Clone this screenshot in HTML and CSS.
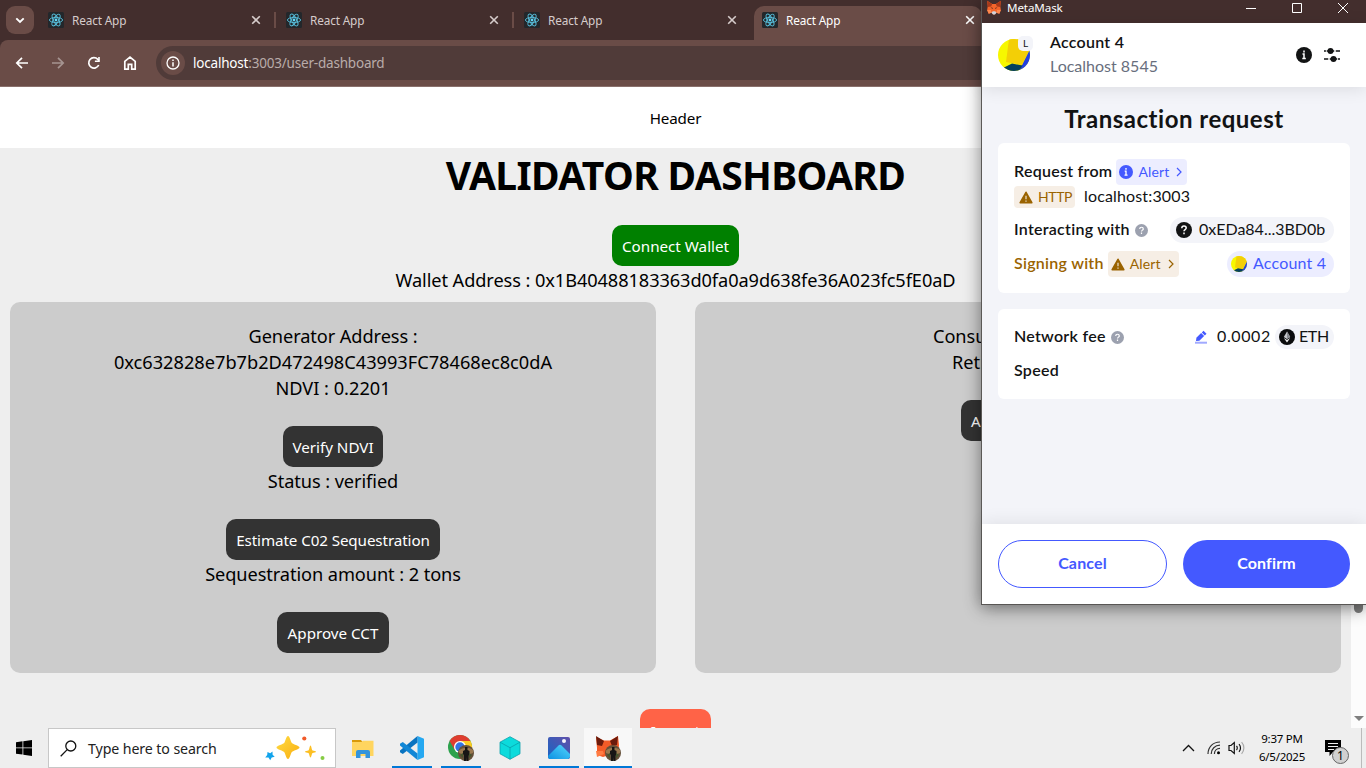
FILE: index.html
```html
<!DOCTYPE html>
<html lang="en">
<head>
<meta charset="utf-8">
<title>React App</title>
<link rel="stylesheet" href="styles.css">
</head>
<body>
<svg width="0" height="0" class="defs">
  <defs>
    <symbol id="react" viewBox="0 0 16 16"><rect width="16" height="16" rx="1.5" fill="#23272b"/><g fill="none" stroke="#58bfdc" stroke-width=".9"><ellipse cx="8" cy="8" rx="6.6" ry="2.6"/><ellipse cx="8" cy="8" rx="6.6" ry="2.6" transform="rotate(60 8 8)"/><ellipse cx="8" cy="8" rx="6.6" ry="2.6" transform="rotate(120 8 8)"/></g><circle cx="8" cy="8" r="1.4" fill="#61dafb"/></symbol>
    <symbol id="close" viewBox="0 0 10 10"><path d="M1.2 1.2l7.6 7.6M8.8 1.2L1.2 8.8" stroke="currentColor" stroke-width="1.6" fill="none"/></symbol>
    <symbol id="fox" viewBox="0 0 24 24"><path d="M1 1l8 5.5h6L23 1l-1 9 1 6-2.5 6-5-1.5L13.500 23h-3L8 20.500 3.500 22 1 16l1-6z" fill="#f4652b"/><path d="M1 1l8 5.500-1.500 4L2 11zM23 1l-8 5.500 1.500 4L22 11z" fill="#a8391a"/><path d="M1 16h6l1 4.500L3.500 22zM23 16h-6l-1 4.500 4.500 1.500z" fill="#ff8a50"/><path d="M8 20.500L10 18h4l2 2.500-2.500 2.500h-3z" fill="#cfd4dc"/><path d="M6.500 12l3 .5.500 2zM17.500 12l-3 .5-.5 2z" fill="#2b1a1a"/></symbol>
    <symbol id="warn" viewBox="0 0 14 13"><path d="M7 1.300L12.800 11.700H1.200z" fill="currentColor" stroke="currentColor" stroke-width="1.600" stroke-linejoin="round"/><path d="M7 4.700v3.600M7 9.500v1.200" stroke="#f6eee5" stroke-width="1.100"/></symbol>
    <symbol id="info" viewBox="0 0 16 16"><circle cx="8" cy="8" r="8" fill="currentColor"/><path d="M8 3.500v1.900M6.500 7.100H8v4.200M6.300 11.600h3.500" stroke="#fff" stroke-width="1.500" fill="none"/></symbol>
    <symbol id="help" viewBox="0 0 16 16"><circle cx="8" cy="8" r="8" fill="currentColor"/><path d="M5.800 6.200c0-3 4.400-2.800 4.400-.2C10.200 7.600 8 7.500 8 9.300M8 10.600v1.600" stroke="#fff" stroke-width="1.500" fill="none"/></symbol>
    <symbol id="chev" viewBox="0 0 6 10"><path d="M1 1l4 4-4 4" fill="none" stroke="currentColor" stroke-width="1.200"/></symbol>
    <clipPath id="round"><circle cx="16" cy="16" r="16"/></clipPath>
    <symbol id="avatar" viewBox="0 0 32 32"><g clip-path="url(#round)"><path fill="#f7f700" d="M0 0h32v32H0z"/><path fill="#2340e0" d="M32 10L21 32h11z"/><path fill="#f3cf06" d="M11 0h21v10l-8 16-16-3z"/><path fill="#033f5e" d="M5 29l9-4.500 10.500 2L21 32H5z"/></g></symbol>
    <symbol id="photo" viewBox="0 0 16 16"><circle cx="8" cy="8" r="8" fill="#655039"/><path d="M1 5.500C5 2 11 2 15 5v3l-3 1H4L1 8z" fill="#9b7950"/><path d="M7 2h2.500v3l2 1v4l-1 .5V16H8.500v-4L8 16H6v-6L5 9V6l2-1z" fill="#171514"/><path d="M2 10l3-2v5zM14 10l-3-2v5z" fill="#44552d"/></symbol>
    <linearGradient id="gold" x1="0" y1="0" x2="1" y2="1"><stop offset="0" stop-color="#ffdc43"/><stop offset="1" stop-color="#f9ae10"/></linearGradient>
    <linearGradient id="picbg" x1="0" y1="1" x2="1" y2="0"><stop offset="0" stop-color="#1764c4"/><stop offset="1" stop-color="#6150aa"/></linearGradient>
    <linearGradient id="hill" x1="0" y1="1" x2="1" y2="0"><stop offset="0" stop-color="#0d91e3"/><stop offset="1" stop-color="#54d6fb"/></linearGradient>
  </defs>
</svg>
<div class="screen">
  <div class="browser">
    <div class="tabstrip">
      <div class="tabmenu"><svg width="10" height="7" viewBox="0 0 10 7"><path d="M1.300 1.300L5 5l3.700-3.700" fill="none" stroke="#fff" stroke-width="1.900"/></svg></div>
      <div class="tab"><svg class="fav"><use href="#react"/></svg><span class="tabname">React App</span><svg class="x"><use href="#close"/></svg></div>
      <div class="tab split"><svg class="fav"><use href="#react"/></svg><span class="tabname">React App</span><svg class="x"><use href="#close"/></svg></div>
      <div class="tab split"><svg class="fav"><use href="#react"/></svg><span class="tabname">React App</span><svg class="x"><use href="#close"/></svg></div>
      <div class="tab active"><svg class="fav"><use href="#react"/></svg><span class="tabname">React App</span><svg class="x"><use href="#close"/></svg></div>
    </div>
    <div class="toolbar">
      <svg class="nav" viewBox="0 0 16 16"><path d="M14 8H3M8 2.800L2.800 8 8 13.200" fill="none" stroke="#fff" stroke-width="1.700"/></svg>
      <svg class="nav dim" viewBox="0 0 16 16"><path d="M2 8h11M8 2.800L13.200 8 8 13.200" fill="none" stroke="#fff" stroke-width="1.700"/></svg>
      <svg class="nav" viewBox="0 0 16 16"><path d="M12.700 10A5.200 5.200 0 1 1 11.800 4.400L13 5.700" fill="none" stroke="#fff" stroke-width="1.700"/><path d="M13.800 2v5H8.900V5.400h3.300V2z" fill="#fff"/></svg>
      <svg class="nav" viewBox="0 0 16 16"><path d="M2.800 6.400L8 2.200l5.200 4.200v7.800H9.700V9.300H6.300v4.900H2.800z" fill="none" stroke="#fff" stroke-width="1.700"/></svg>
      <div class="address">
        <div class="site"><svg width="14" height="14" viewBox="0 0 14 14"><circle cx="7" cy="7" r="6" fill="none" stroke="#fff" stroke-width="1.300"/><path d="M7 3.400v1.500M7 6.200v4.400" stroke="#fff" stroke-width="1.500"/></svg></div>
        <span class="url"><b>localhost</b>:3003/user-dashboard</span>
      </div>
    </div>
    <div class="viewport">
      <div class="page">
        <header class="pagehead">Header</header>
        <h1 class="title">VALIDATOR DASHBOARD</h1>
        <button class="btn green">Connect Wallet</button>
        <div class="line wallet">Wallet Address : 0x1B40488183363d0fa0a9d638fe36A023fc5fE0aD</div>
        <div class="cards">
          <section class="card">
            <div class="line">Generator Address :</div>
            <div class="line hash">0xc632828e7b7b2D472498C43993FC78468ec8c0dA</div>
            <div class="line hash">NDVI : 0.2201</div>
            <button class="btn dark b1">Verify NDVI</button>
            <div class="line after">Status : verified</div>
            <button class="btn dark b2">Estimate C02 Sequestration</button>
            <div class="line after">Sequestration amount : 2 tons</div>
            <button class="btn dark b3">Approve CCT</button>
          </section>
          <section class="card">
            <div class="line consumer">Consu</div>
            <div class="line retire">Reti</div>
            <button class="btn dark b4">A</button>
          </section>
        </div>
        <button class="btn import">Import</button>
      </div>
      <div class="scrollbar"><i class="thumb"></i><i class="down"></i></div>
    </div>
  </div>

  <div class="popup">
    <div class="wintitle"><svg class="winfox"><use href="#fox"/></svg><span class="winname">MetaMask</span>
      <div class="controls"><svg viewBox="0 0 10 10"><path d="M0 5.500h10" stroke="#fff"/></svg><svg viewBox="0 0 10 10"><path d="M.5.5h9v9h-9z" fill="none" stroke="#fff"/></svg><svg viewBox="0 0 10 10"><path d="M0 0l10 10M10 0L0 10" stroke="#fff"/></svg></div>
    </div>
    <div class="account">
      <div class="avatar"><svg width="32" height="32"><use href="#avatar"/></svg><span class="netbadge">L</span></div>
      <div class="names"><span class="accname">Account 4</span><span class="netname">Localhost 8545</span></div>
      <svg class="accinfo"><use href="#info"/></svg>
      <svg class="sliders" viewBox="0 0 18 16"><path d="M1 4h16M1 12h16" stroke="#121314" stroke-width="1.300"/><path d="M2.900 4h1M11 4h2M5 12h2M14 12h1" stroke="#fff" stroke-width="1.500"/><circle cx="7.500" cy="4" r="3" fill="#121314"/><circle cx="10.500" cy="12" r="3" fill="#121314"/></svg>
    </div>
    <div class="pbody">
      <h2 class="ptitle">Transaction request</h2>
      <section class="panel">
        <div class="row"><span class="label">Request from</span><span class="tag info"><svg class="i14"><use href="#info"/></svg><span class="tagtext">Alert</span><svg class="cv"><use href="#chev"/></svg></span></div>
        <div class="row origin"><span class="tag http"><svg class="iw"><use href="#warn"/></svg><span class="tagtext">HTTP</span></span><span class="val host">localhost:3003</span></div>
        <div class="row inter"><span class="label">Interacting with</span><svg class="helpicon"><use href="#help"/></svg><span class="pill grey end"><svg class="i16"><use href="#help"/></svg><span class="val addr">0xEDa84...3BD0b</span></span></div>
        <div class="row sign"><span class="label warnc">Signing with</span><span class="tag warnt"><svg class="iw"><use href="#warn"/></svg><span class="tagtext">Alert</span><svg class="cv"><use href="#chev"/></svg></span><span class="pill blue end"><svg class="i16"><use href="#avatar"/></svg><span class="val acc">Account 4</span></span></div>
      </section>
      <section class="panel second">
        <div class="row fee"><span class="label">Network fee</span><svg class="helpicon"><use href="#help"/></svg>
          <svg class="edit end" viewBox="0 0 12 14"><path d="M0 12.700h12" stroke="#a1aaff" stroke-width="2"/><path d="M1 11l.4-3.200 4.700-4.700 3 3L4.400 10.700z" fill="#4459ff"/><path d="M6.800 2.400L8.500.7l3 3-1.700 1.700z" fill="#4459ff"/></svg>
          <span class="val amount">0.0002</span>
          <span class="pill grey eth"><svg width="16" height="16" viewBox="0 0 16 16"><circle cx="8" cy="8" r="8" fill="#0b0c0d"/><path d="M8 2.500l3.200 5.600L8 10.100 4.800 8.100z" fill="#c3c5c9"/><path d="M4.800 9L8 13.500 11.200 9 8 11z" fill="#f1f1f2"/><path d="M8 2.500v7.600L11.200 8.100z" fill="#8b8d92"/></svg><span class="val ethname">ETH</span></span></div>
        <div class="row speed"><span class="label">Speed</span></div>
      </section>
    </div>
    <div class="actions"><button class="act cancel">Cancel</button><button class="act confirm">Confirm</button></div>
  </div>

  <div class="taskbar">
    <div class="start"><svg width="16" height="16" viewBox="0 0 16 16"><path d="M0 2.200l6.500-.9v6.200H0zM7.300 1.200L16 0v7.500H7.300zM0 8.300h6.500v6.300L0 13.700zM7.300 8.300H16V16l-8.700-1.200z"/></svg></div>
    <div class="search">
      <svg width="17" height="17" viewBox="0 0 17 17"><circle cx="10.800" cy="6" r="5" fill="none" stroke="#111" stroke-width="1.300"/><path d="M7.200 9.600L.7 16.200" stroke="#111" stroke-width="1.300"/></svg>
      <span class="hint">Type here to search</span>
      <svg class="sparkle" width="62" height="26" viewBox="0 0 62 26"><path d="M24 1c1.500 0 2 3 3.500 6.500 1 2 8 3 8 5s-7 3-8 5C26 21 25.500 24 24 24s-2-3-3.500-6.500c-1-2-8-3-8-5s7-3 8-5C22 4 22.500 1 24 1z" fill="url(#gold)"/><path d="M46.500 10.500c1 0 1 4.500 2.200 5 1 .5 3.300.3 3.300 1.200s-2.300.8-3.300 1.300c-1.200.5-1.200 4.500-2.200 4.500s-1-4-2.200-4.500c-1-.5-3.300-.4-3.300-1.300s2.300-.7 3.300-1.200c1.200-.5 1.200-5 2.200-5z" fill="#fcbf23"/><path d="M3.500 17l2.700 1.300 2.300-1.800.1 3.200 2.100 2.100-3 .6-1.500 2.900-1.700-2.700-3.300-.2 2-2.500z" fill="#12a4ec"/><circle cx="40.300" cy="3.500" r="2.100" fill="#f15a29"/><circle cx="58.500" cy="23" r="2" fill="#86cc45"/></svg>
    </div>
    <div class="apps">
      <div class="app"><svg width="22" height="19" viewBox="0 0 22 19"><path d="M0 1h9l1.500 2H0z" fill="#d99a09"/><path d="M0 3h9.500L11 1.700h10.500V17H0z" fill="#ffd55f"/><path d="M4 19v-6a2 2 0 0 1 2-2h10a2 2 0 0 1 2 2v6h-4.500v-4h-5v4z" fill="#3394dc"/></svg></div>
      <div class="app run"><svg width="24" height="24" viewBox="0 0 24 24"><path d="M17.500 0L24 2.800v18.400L17.500 24z" fill="#25a8f1"/><path d="M17.500 0v6.500L2.800 18 0 16.200v-1.700z" fill="#0873c0"/><path d="M17.500 24v-6.500L2.800 6 0 7.800v1.700z" fill="#1187d6"/></svg></div>
      <div class="app run"><svg width="26" height="26" viewBox="0 0 26 26"><circle cx="12" cy="12" r="12" fill="#2da24d"/><path d="M1.600 6A12 12 0 0 1 22.400 6H12v6z" fill="#df3d30"/><path d="M1.600 6l5.200 9L12 6z" fill="#df3d30"/><path d="M12 6h10.400A12 12 0 0 1 12 24l5.200-9z" fill="#fccb20"/><circle cx="12" cy="12" r="6" fill="#fff"/><circle cx="12" cy="12" r="4.700" fill="#3373e4"/><use href="#photo" x="10" y="10" width="16" height="16"/></svg></div>
      <div class="app"><svg width="22" height="24" viewBox="0 0 22 24"><path d="M11 .7l10 5.500v11.600l-10 5.500-10-5.500V6.200z" fill="#0cdbdc"/><path d="M1 6.200l10 5.500 10-5.500M11 11.700v11.600M1 6.200L11 .7l10 5.500v11.600l-10 5.500-10-5.500z" fill="none" stroke="#08a1ac" stroke-width=".8"/></svg></div>
      <div class="app run"><svg width="22" height="22" viewBox="0 0 22 22"><rect width="22" height="22" rx="2" fill="url(#picbg)"/><path d="M1 22l-1-3L10.500 8.500a2.300 2.300 0 0 1 3 0L22 17v3l-2 2z" fill="url(#hill)"/><circle cx="16" cy="4" r="2" fill="#f6f4fc"/></svg></div>
      <div class="app run current"><svg width="26" height="26" viewBox="0 0 26 26"><path d="M1 2l8 3.500h6L23 1l1 9-1 11-9-1-6 2-6-2v-7z" fill="#f45b27"/><path d="M1 1l8 5-2 5-5-1zM23 1l-8 5 2 5 5-1z" fill="#6b1b0c"/><path d="M1 16h7l1 3-7 3z" fill="#ff7c43"/><use href="#photo" x="10" y="10" width="16" height="16"/></svg></div>
    </div>
    <div class="tray">
      <svg width="13" height="8" viewBox="0 0 13 8"><path d="M1 7l5.500-5.500L12 7" fill="none" stroke="#111" stroke-width="1.300"/></svg>
      <svg class="wifi" width="14" height="14" viewBox="0 0 14 14"><g fill="none" stroke="#333" stroke-width="1.200"><path d="M1 13C1 6 6 1 13 1M4.200 13c0-5 3.800-8.800 8.800-8.800M7.400 13c0-3.200 2.400-5.600 5.600-5.600"/></g><circle cx="11.500" cy="11.800" r="1.500"/></svg>
      <svg class="vol" width="18" height="14" viewBox="0 0 18 14"><g fill="none" stroke="#111" stroke-width="1.200"><path d="M1 4.500h2L6.300 1.500v11L3 9.500H1zM8.500 5c1 1 1 3 0 4M11 3.200c2 2 2 5.600 0 7.600"/><path d="M13.600 1.200c3 3.200 3 8.400 0 11.600" stroke="#aaa"/></g></svg>
      <div class="clock"><span class="time">9:37 PM</span><span class="date">6/5/2025</span></div>
      <div class="notice"><svg width="16" height="16" viewBox="0 0 16 16"><path d="M0 0h16v12H8l-3.500 4v-4H0z"/><path d="M3 3.500h10M3 6.500h10M3 9.500h6" stroke="#eee" stroke-width="1.200"/></svg><span class="count">1</span></div>
      <i class="desk"></i>
    </div>
  </div>
</div>
</body>
</html>
```
FILE: styles.css
```css
*{box-sizing:border-box}
body{margin:0;font-family:"Noto Sans","Open Sans",sans-serif;color:#000}
svg{display:block;flex:none}
button{font:inherit;border:0;padding:0;margin:0;white-space:nowrap}
.defs{position:absolute}
.screen{position:relative;width:1366px;height:768px;overflow:hidden;display:flex;flex-direction:column}
.browser{height:728px;display:flex;flex-direction:column;background:#432e2d}

.tabstrip{height:40px;flex:none;display:flex;padding:6px 0 0 6px}
.tabmenu{width:28px;height:28px;border-radius:9px;background:#6a4c47;display:flex;align-items:center;justify-content:center;margin-right:2px}
.tab{width:238px;height:34px;display:flex;align-items:center;padding:0 13px 6px 12px;color:#d6cccb;flex:none}
.split{background:linear-gradient(#6a4c47,#6a4c47) 0 6px/2px 16px no-repeat}
.active{background:#6a4c47;border-radius:10px 10px 0 0;color:#fff;margin-left:4px;width:228px;padding-left:8px;padding-right:7px}
.tab .fav{width:16px;height:16px}
.tabname{font-size:11.8px;letter-spacing:-.15px;margin-left:8px;flex:1}
.x{width:10px;height:10px}
.toolbar{height:47px;flex:none;background:#6a4c47;border-bottom:1px solid #89706c;border-radius:8px 0 0 0;display:flex;align-items:center;padding-left:14px;gap:20px}
.nav{width:16px;height:16px}
.dim{opacity:.4}
.address{flex:1;height:34px;margin-left:-2px;border-radius:17px;background:#503b39;display:flex;align-items:center;padding-left:5px}
.site{width:24px;height:24px;border-radius:50%;background:#6a4c47;display:flex;align-items:center;justify-content:center}
.url{margin-left:8px;font-size:13.500px;letter-spacing:-.2px;color:#b9acaa}
.url b{font-weight:400;color:#fff}

.viewport{height:641px;display:flex;background:#eee;overflow:hidden}
.page{width:1351px;height:641px;display:flex;flex-direction:column;align-items:center;overflow:hidden}
.pagehead{width:100%;height:61px;flex:none;background:#fff;display:flex;align-items:center;justify-content:center;font-size:15.2px;letter-spacing:-.15px}
.title{margin:0;height:77px;flex:none;font-size:39px;letter-spacing:-.62px;line-height:54px;font-weight:700}
.btn{height:41px;flex:none;border-radius:10px;color:#fff;font-size:15.2px}
.green{background:green;width:127px}
.line{font-size:18.2px;letter-spacing:-.08px;line-height:26px;height:26px;flex:none;white-space:nowrap}
.wallet{margin-top:1px}
.hash{letter-spacing:0}
.cards{width:100%;margin-top:9px;padding:0 10px;display:flex;justify-content:space-between}
.card{width:646px;height:371px;background:#ccc;border-radius:10px;padding-top:21px;display:flex;flex-direction:column;align-items:center}
.consumer{width:170px}
.retire{width:132px}
.dark{background:#333;margin-top:25px}
.after{margin-top:1px}
.b1{width:100px}
.b2{width:214px;letter-spacing:-.1px}
.b3{width:112px}
.b4{width:114px;text-align:left;padding-left:10px}
.import{background:tomato;width:71px;margin-top:36px;padding-top:3px}
.scrollbar{width:15px;background:#fcfcfc;display:flex;flex-direction:column;align-items:center;padding-bottom:7px}
.thumb{width:9px;height:526px;border-radius:5px;background:#7f7f7f}
.down{margin-top:auto;border:5px solid transparent;border-top-color:#7f7f7f;border-bottom:0}

.popup{position:absolute;left:981px;top:0;width:385px;height:605px;border-left:1px solid #5b5957;border-bottom:1px solid #5b5957;background:#f3f4f9;box-shadow:0 3px 16px rgba(0,0,0,.45);display:flex;flex-direction:column;font-family:Lato,sans-serif;color:#121314}
.wintitle{height:23px;flex:none;background:#432e2d;color:#fff;display:flex;align-items:flex-start;padding-left:4px;font-family:"Noto Sans",sans-serif}
.winfox{width:16px;height:15px}
.winname{font-size:11.6px;line-height:16px;margin-left:5px;letter-spacing:-.1px}
.controls{margin:3px 18px 0 auto;display:flex;gap:36px}
.controls svg{width:10px;height:10px}
.account{height:64px;flex:none;background:#fff;box-shadow:0 2px 16px rgba(0,0,0,.1);display:flex;align-items:center;padding:0 25px 0 16px}
.avatar{position:relative}
.netbadge{position:absolute;left:20px;top:-3px;width:15px;height:15px;border-radius:5px;background:#f3f4f9;font-size:10px;line-height:15px;text-align:center}
.names{display:flex;flex-direction:column;margin-left:20px;flex:1;font-size:16px;line-height:24px;padding-bottom:3px}
.accname{font-weight:600;letter-spacing:.25px}
.netname{color:#686e7d}
.accinfo{width:16px;height:16px;margin-right:11px}
.sliders{width:18px;height:16px}
.pbody{flex:1;padding:16px 16px 0}
.ptitle{margin:0 0 8px;text-align:center;font-size:24px;letter-spacing:.5px;line-height:32px;font-weight:700}
.panel{background:#fff;border-radius:6px;padding:16px}
.second{margin-top:16px}
.row{display:flex;align-items:center;height:26px;font-size:16px}
.label{font-weight:600;letter-spacing:.27px;padding-bottom:3px}
.val{padding-bottom:3px}
.warnc,.warnt,.http{color:#9a6300}
.tag{height:26px;display:flex;align-items:center;border-radius:4px;font-size:14px;width:71px;margin-left:4px;padding:0 5px 0 3px}
.info,.blue{background:#ecedff;color:#4459ff}
.warnt,.http{background:#f6eee5}
.i14{width:14px;height:14px}
.tagtext{margin-left:5px;flex:1;letter-spacing:.15px;padding-bottom:2px}
.cv{width:6px;height:10px}
.iw{width:14px;height:13px}
.http{width:61px;height:22px;margin-left:0;padding:0 0 0 5px}
.http .tagtext{letter-spacing:-.4px}
.origin{height:22px;margin-top:1px}
.host{margin-left:9px;letter-spacing:.15px}
.inter{margin-top:9px}
.sign{margin-top:8px}
.helpicon{width:13px;height:13px;color:#9ca1af;margin-left:5px}
.end{margin-left:auto}
.pill{height:26px;border-radius:13px;display:flex;align-items:center;padding-right:8px}
.grey{background:#f3f4f9}
.inter .pill{width:164px;padding-left:6px}
.sign .pill{width:107px;padding-left:4px}
.i16{width:16px;height:16px}
.addr{margin-left:7px}
.acc{margin-left:6px;letter-spacing:.2px;white-space:nowrap}
.fee,.speed{height:24px}
.speed{margin-top:10px}
.edit{width:12px;height:14px}
.amount{margin-left:10px;width:53px;letter-spacing:.6px}
.eth{height:24px;width:59px;padding-left:4px;margin-left:5px}
.ethname{margin-left:4px;letter-spacing:-.4px}
.actions{height:80px;flex:none;background:#fff;box-shadow:0 -2px 16px rgba(0,0,0,.08);display:flex;gap:16px;padding:16px}
.act{height:48px;border-radius:24px;font-size:16px;font-weight:700;letter-spacing:.15px;padding-bottom:3px}
.cancel{width:169px;border:1px solid #4459ff;background:#fff;color:#4459ff}
.confirm{width:167px;background:#4459ff;color:#fff}

.taskbar{height:40px;background:#eee;display:flex}
.start{width:48px;display:flex;align-items:center;justify-content:center}
.search{width:288px;border:1px solid #c7c7c7;background:#fff;display:flex;align-items:center;padding-left:11px}
.hint{font-size:14.2px;letter-spacing:-.1px;margin-left:11px;color:#222}
.sparkle{margin-left:auto;margin-right:9px}
.apps{display:flex;padding-left:3px}
.app{width:48px;margin-right:1px;display:flex;align-items:center;justify-content:center}
.run{background:linear-gradient(#0078d7,#0078d7) 50% 100%/40px 2px no-repeat}
.current{background:linear-gradient(#0078d7,#0078d7) 50% 100%/48px 2px no-repeat,#f8f8f8}
.tray{margin-left:auto;display:flex;align-items:center}
.wifi{margin-left:12px}
.vol{margin-left:7px}
.clock{width:80px;display:flex;flex-direction:column;align-items:center;font-size:11.500px;letter-spacing:-.25px;line-height:18px;margin-left:-4px;padding-bottom:1px}
.notice{position:relative;margin-left:3px}
.count{position:absolute;left:7px;top:7px;width:17px;height:17px;border:1px solid #666;border-radius:50%;background:#d0d0d0;font-size:12px;line-height:15px;text-align:center}
.desk{width:5px;height:40px;border-left:1px solid #bbb;margin-left:20px}
```
